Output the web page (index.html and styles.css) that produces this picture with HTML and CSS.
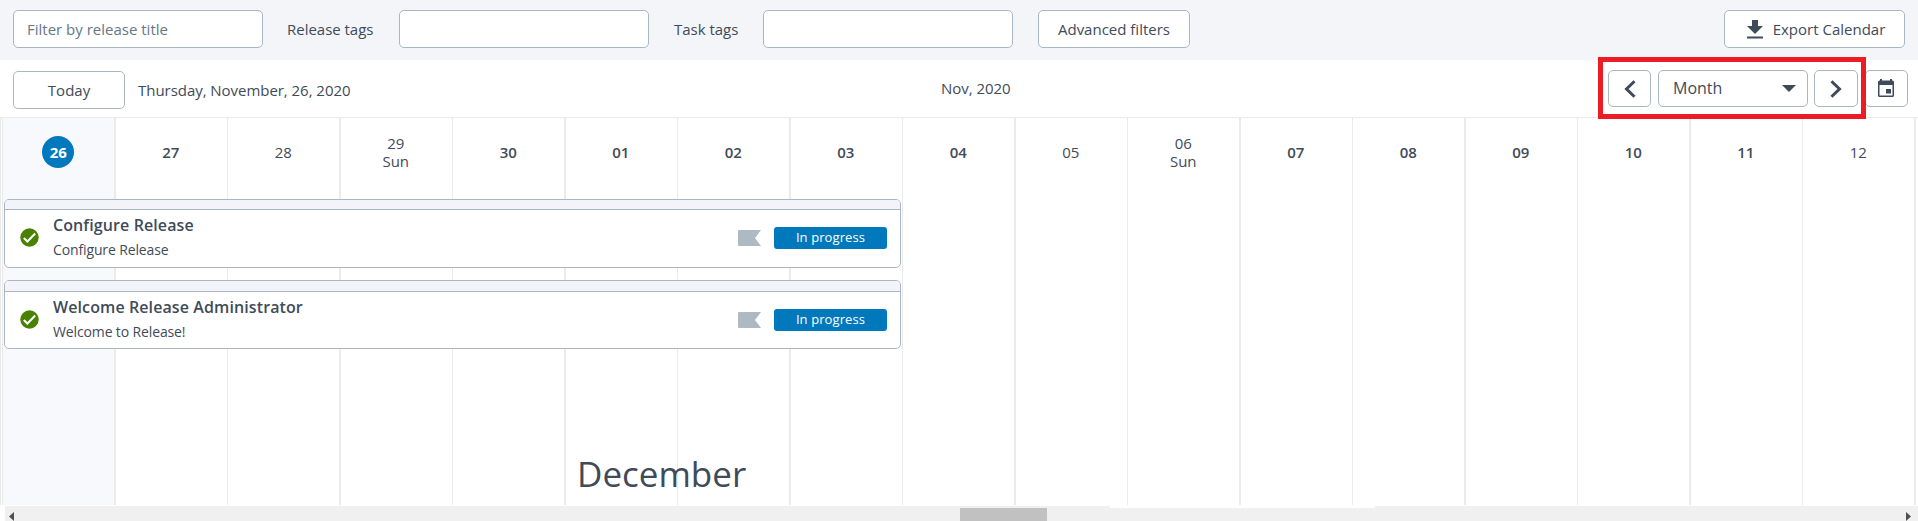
FILE: index.html
```html
<!DOCTYPE html>
<html lang="en">
<head>
<meta charset="utf-8">
<title>Release calendar</title>
<link rel="stylesheet" href="styles.css">
</head>
<body>
<header class="filters">
  <input class="field" type="text" placeholder="Filter by release title">
  <label class="filter-label release" for="rtags">Release tags</label>
  <input class="field" id="rtags" type="text">
  <label class="filter-label task" for="ttags">Task tags</label>
  <input class="field" id="ttags" type="text">
  <button class="btn advanced">Advanced filters</button>
  <button class="btn export">
    <svg class="download" width="16" height="19" viewBox="0 0 16 19"><path d="M5 0h6v6h5l-8 8-8-8h5zM0 16.500h16v2H0z"/></svg>
    <span>Export Calendar</span>
  </button>
</header>
<section class="toolbar">
  <button class="btn today">Today</button>
  <span class="date">Thursday, November, 26, 2020</span>
  <span class="period">Nov, 2020</span>
  <div class="nav">
    <button class="btn prev"><svg width="12" height="18" viewBox="0 0 12 18"><path class="chevron" d="M10.500 1.200 2.500 9l8 7.800"/></svg></button>
    <button class="btn select"><span>Month</span><svg width="14" height="7" viewBox="0 0 14 7"><path d="M0 0h14L7 7z"/></svg></button>
    <button class="btn next"><svg width="12" height="18" viewBox="0 0 12 18"><path class="chevron" d="M1.500 1.200 9.500 9l-8 7.800"/></svg></button>
    <button class="btn pick"><svg width="16" height="18" viewBox="0 0 16 18"><path fill-rule="evenodd" d="M2 0h2v1.500h8V0h2v1.500h.5A1.500 1.500 0 0 1 16 3v13.500a1.500 1.500 0 0 1-1.500 1.500h-13A1.500 1.500 0 0 1 0 16.500V3a1.500 1.500 0 0 1 1.500-1.500H2zM1.500 6v10.500h13V6zM8 10h5v4.500H8z"/></svg></button>
  </div>
  <div class="highlight"></div>
</section>
<main class="calendar">
  <div class="columns">
    <i class="current"></i><i></i><i></i><i></i><i></i><i></i><i></i><i></i><i></i><i></i><i></i><i></i><i></i><i></i><i></i><i></i><i></i>
  </div>
  <div class="content">
    <div class="days">
      <div class="day"><b class="badge">26</b></div>
      <div class="day work">27</div>
      <div class="day">28</div>
      <div class="day">29<br>Sun</div>
      <div class="day work">30</div>
      <div class="day work">01</div>
      <div class="day work">02</div>
      <div class="day work">03</div>
      <div class="day work">04</div>
      <div class="day">05</div>
      <div class="day">06<br>Sun</div>
      <div class="day work">07</div>
      <div class="day work">08</div>
      <div class="day work">09</div>
      <div class="day work">10</div>
      <div class="day work">11</div>
      <div class="day">12</div>
    </div>
    <div class="releases">
      <article class="card">
        <div class="strip"></div>
        <div class="card-body">
          <svg class="check" width="19" height="19" viewBox="0 0 19 19"><circle cx="9.500" cy="9.500" r="9.200"/><path d="m3.800 10 3.600 3.500 7.800-8"/></svg>
          <div class="texts"><h3>Configure Release</h3><p>Configure Release</p></div>
          <svg class="flag" width="23" height="16" viewBox="0 0 23 16"><path d="M1 0h22l-6 8 6 8H1a1 1 0 0 1-1-1V1a1 1 0 0 1 1-1z"/></svg>
          <span class="status">In progress</span>
        </div>
      </article>
      <article class="card tall">
        <div class="strip"></div>
        <div class="card-body">
          <svg class="check" width="19" height="19" viewBox="0 0 19 19"><circle cx="9.500" cy="9.500" r="9.200"/><path d="m3.800 10 3.600 3.500 7.800-8"/></svg>
          <div class="texts"><h3>Welcome Release Administrator</h3><p>Welcome to Release!</p></div>
          <svg class="flag" width="23" height="16" viewBox="0 0 23 16"><path d="M1 0h22l-6 8 6 8H1a1 1 0 0 1-1-1V1a1 1 0 0 1 1-1z"/></svg>
          <span class="status">In progress</span>
        </div>
      </article>
    </div>
    <div class="month">December</div>
  </div>
</main>
<footer class="scrollbar">
  <svg class="arrow" width="5" height="9" viewBox="0 0 5 9"><path d="M5 0v9L0 4.500z"/></svg>
  <div class="thumb"></div>
  <svg class="arrow" width="5" height="9" viewBox="0 0 5 9"><path d="M0 0v9l5-4.500z"/></svg>
  <div class="notch"></div>
</footer>
</body>
</html>
```
FILE: styles.css
```css
* { box-sizing: border-box; }
body {
  margin: 0;
  height: 521px;
  overflow: hidden;
  background: #fff;
  color: #3f4b59;
  font: 15px/20px "Open Sans", sans-serif;
}
.btn, .field {
  flex: none;
  height: 38px;
  padding: 0;
  border: 1px solid #a9b7c3;
  border-radius: 5px;
  background: #fff;
  color: inherit;
  font: inherit;
}
svg { display: block; flex: none; fill: #3f4b59; }
.filters {
  display: flex;
  align-items: flex-start;
  height: 60px;
  padding: 10px 13px 0;
  background: #f3f5f9;
}
.field { width: 250px; padding: 0 13px; }
.field::placeholder { color: #667785; opacity: 1; }
.filter-label { flex: none; padding: 9px 0 0 24px; letter-spacing: -0.02px; }
.release { width: 136px; }
.task { width: 114px; padding-left: 25px; }
.advanced { width: 152px; margin-left: 25px; }
.export {
  display: flex;
  align-items: center;
  justify-content: center;
  gap: 10px;
  width: 181px;
  margin-left: auto;
  padding-left: 3px;
}
.toolbar {
  position: relative;
  display: flex;
  height: 58px;
  padding: 10px 10px 0 13px;
  border-bottom: 1px solid #eaeaea;
}
.today { width: 112px; margin-top: 1px; }
.date { width: 803px; padding: 10px 0 0 13px; letter-spacing: -0.04px; }
.period { padding-top: 8px; margin-left: 13px; letter-spacing: -0.04px; }
.nav { display: flex; margin-left: auto; }
.nav .btn { display: flex; align-items: center; justify-content: center; height: 37px; }
.nav .prev { width: 43px; }
.nav .select { width: 150px; margin: 0 6px 0 7px; padding: 0 11px 2px 14px; justify-content: space-between; font-size: 16px; }
.nav .select svg { margin-top: 2px; }
.nav .next { width: 44px; }
.nav .pick { width: 43px; margin-left: 7px; padding: 0 2px 1px 0; }
.chevron { fill: none; stroke: #3f4b59; stroke-width: 3; }
.highlight {
  position: absolute;
  left: 1598px;
  top: -3px;
  width: 268px;
  height: 62px;
  border: 5px solid #ed1c24;
}
.calendar { display: grid; height: 388px; }
.columns, .content { grid-area: 1 / 1; }
.columns {
  display: flex;
  height: 387px;
  border-left: 1px solid #eaeaea;
}
.columns::before { content: ""; flex: none; width: 1px; border-right: 1px solid #eaeaea; }
.columns i { flex: none; width: 112px; border-right: 1px solid #ebebeb; }
.columns i:nth-child(odd) { width: 113px; border-right-width: 2px; }
.columns .current { background: #f8f9fc; }
.days { display: grid; grid-template-columns: repeat(17, 112.5px); height: 81px; margin-left: 2px; }
.day {
  display: flex;
  align-items: center;
  justify-content: center;
  height: 67px;
  line-height: 18px;
  text-align: center;
}
.work { font-weight: 600; }
.badge {
  width: 32px;
  height: 32px;
  border-radius: 50%;
  background: #0079bc;
  color: #fff;
  line-height: 32px;
}
.releases { display: grid; gap: 12px; width: 897px; margin-left: 4px; }
.card {
  height: 69px;
  overflow: hidden;
  border: 1px solid #a9b7c3;
  border-radius: 5px;
  background: #fff;
}
.strip { height: 10px; border-bottom: 1px solid #a9b7c3; background: #f3f4f9; }
.tall .strip { height: 11px; }
.card-body { display: flex; height: 57px; padding: 0 13px 0 15px; }
.check { margin-top: 18px; fill: #498200; }
.check path { fill: none; stroke: #fff; stroke-width: 2; }
.texts { flex: 1; padding: 4px 0 0 14px; }
.texts h3 { margin: 0; font-size: 16px; font-weight: 600; line-height: 22px; letter-spacing: 0.1px; }
.texts p { margin: 0; padding-top: 4px; font-size: 14px; line-height: 20px; letter-spacing: -0.13px; }
.flag { margin: 20px 13px 0 0; fill: #adb9c3; }
.status {
  width: 113px;
  height: 22px;
  margin-top: 17px;
  border-radius: 3px;
  background: #0079bc;
  color: #fff;
  font-size: 13px;
  font-weight: 500;
  line-height: 21px;
  letter-spacing: 0.1px;
  text-align: center;
}
.month { padding: 101px 0 0 577px; font-size: 35px; line-height: 48px; }
.scrollbar {
  position: relative;
  display: flex;
  height: 15px;
  margin-left: 5px;
  padding-left: 4px;
  background: #f0f0f0;
}
.arrow { margin-top: 6px; fill: #505050; }
.thumb { width: 87px; height: 13px; margin: 2px 859px 0 946px; background: #c1c1c1; }
.notch { position: absolute; left: 1105px; top: 0; width: 265px; height: 2px; background: #fff; }
```
